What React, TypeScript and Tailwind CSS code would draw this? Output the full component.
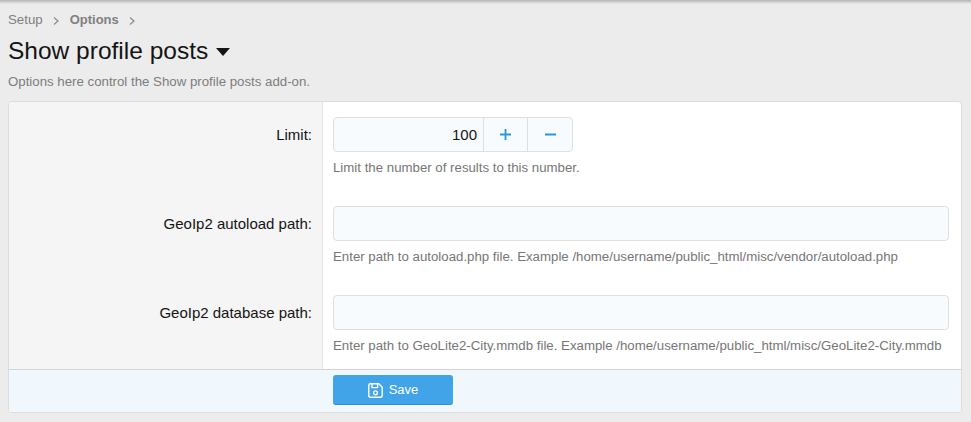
function Chevron() {
  return (
    <svg width="6" height="8" viewBox="0 0 6 8" className="mt-[1px]">
      <path d="M1 .5 5 4 1 7.5" fill="none" stroke="#8a8a8a" strokeWidth="1.2" />
    </svg>
  );
}

function Row({ label, hint, pad, children }: any) {
  return (
    <div className="flex">
      <div
        className={`w-[314px] shrink-0 border-r border-[#e4e4e4] bg-[#f5f5f5] pr-[10px] text-right text-[15px] leading-[18px] text-[#141414] ${pad}`}
      >
        <span className="relative top-[9px]">{label}</span>
      </div>
      <div className={`flex-1 pl-[10px] pr-[12px] ${pad}`}>
        {children}
        <p className="mt-[7px] text-[13.25px] leading-[17px] text-[#767676]">{hint}</p>
      </div>
    </div>
  );
}

export default function App() {
  return (
    <div className="h-[422px] w-[971px] overflow-hidden bg-[#ececec] font-['Liberation_Sans',Arial,sans-serif]">
      {/* Top shadow */}
      <div className="h-[4px] bg-gradient-to-b from-[#b4b4b4] to-[#ececec]" />

      {/* Header */}
      <div className="px-[8px]">
        <div className="mt-[8px] flex items-center text-[13.25px] leading-[16px] text-[#808080]">
          <span>Setup</span>
          <span className="ml-[10px]"><Chevron /></span>
          <span className="ml-[11px] text-[13px] font-bold">Options</span>
          <span className="ml-[10px]"><Chevron /></span>
        </div>
        <div className="mt-[7px] flex items-center">
          <h1 className="text-[24.5px] leading-[32px] text-[#141414]">Show profile posts</h1>
          <svg className="ml-[8px] mt-[1px]" width="14" height="8" viewBox="0 0 14 8">
            <path d="M0 0H14L7 8Z" fill="#141414" />
          </svg>
        </div>
        <p className="mt-[6px] text-[13.25px] leading-[17px] text-[#7d7d7d]">
          Options here control the Show profile posts add-on.
        </p>
      </div>

      {/* Form */}
      <div className="ml-[8px] mt-[11px] w-[954px] overflow-hidden rounded-[4px] border border-[#dcdcdc] bg-white">
        <Row label="Limit:" hint="Limit the number of results to this number." pad="pt-[15px] pb-[30px]">
          <div className="flex h-[35px] w-[240px] rounded-[4px] border border-[#dfdfdf] bg-[#f7fbfe]">
            <div className="flex-1 pr-[6px] text-right text-[15px] leading-[33px] text-[#141414]">100</div>
            <div className="flex w-[44px] items-center justify-center border-l border-[#dfdfdf]">
              <svg width="13" height="13" viewBox="0 0 13 13">
                <path d="M6.5 1V12M1 6.5H12" stroke="#2b96df" strokeWidth="1.8" />
              </svg>
            </div>
            <div className="flex w-[45px] items-center justify-center border-l border-[#dfdfdf]">
              <svg width="13" height="13" viewBox="0 0 13 13">
                <path d="M1 6.5H12" stroke="#2b96df" strokeWidth="1.8" />
              </svg>
            </div>
          </div>
        </Row>
        <Row
          label="GeoIp2 autoload path:"
          hint="Enter path to autoload.php file. Example /home/username/public_html/misc/vendor/autoload.php"
          pad="pt-0 pb-[30px]"
        >
          <div className="h-[35px] w-[616px] rounded-[4px] border border-[#dfdfdf] bg-[#f7fbfe]" />
        </Row>
        <Row
          label="GeoIp2 database path:"
          hint="Enter path to GeoLite2-City.mmdb file. Example /home/username/public_html/misc/GeoLite2-City.mmdb"
          pad="pt-0 pb-[15px]"
        >
          <div className="h-[35px] w-[616px] rounded-[4px] border border-[#dfdfdf] bg-[#f7fbfe]" />
        </Row>

        {/* Footer */}
        <div className="h-[43px] border-t border-[#d4d4d4] bg-[#f0f7fd] pl-[324px] pt-[5px]">
          <button className="flex h-[30px] w-[120px] items-center justify-center gap-[6px] rounded-[3px] border-b border-[#2b8fd6] bg-[#41a3e8] pt-[1px] text-[13px] text-white">
            <svg width="15" height="15" viewBox="0 0 15 15" fill="none" stroke="currentColor" strokeWidth="1.4">
              <path d="M2.2.8H10.8L14.2 4.2V12.8A1.4 1.4 0 0 1 12.8 14.2H2.2A1.4 1.4 0 0 1 .8 12.8V2.2A1.4 1.4 0 0 1 2.2.8Z" />
              <path d="M4 1V4.6H9.6V1" />
              <circle cx="7.5" cy="9.8" r="1.9" />
            </svg>
            Save
          </button>
        </div>
      </div>
    </div>
  );
}
